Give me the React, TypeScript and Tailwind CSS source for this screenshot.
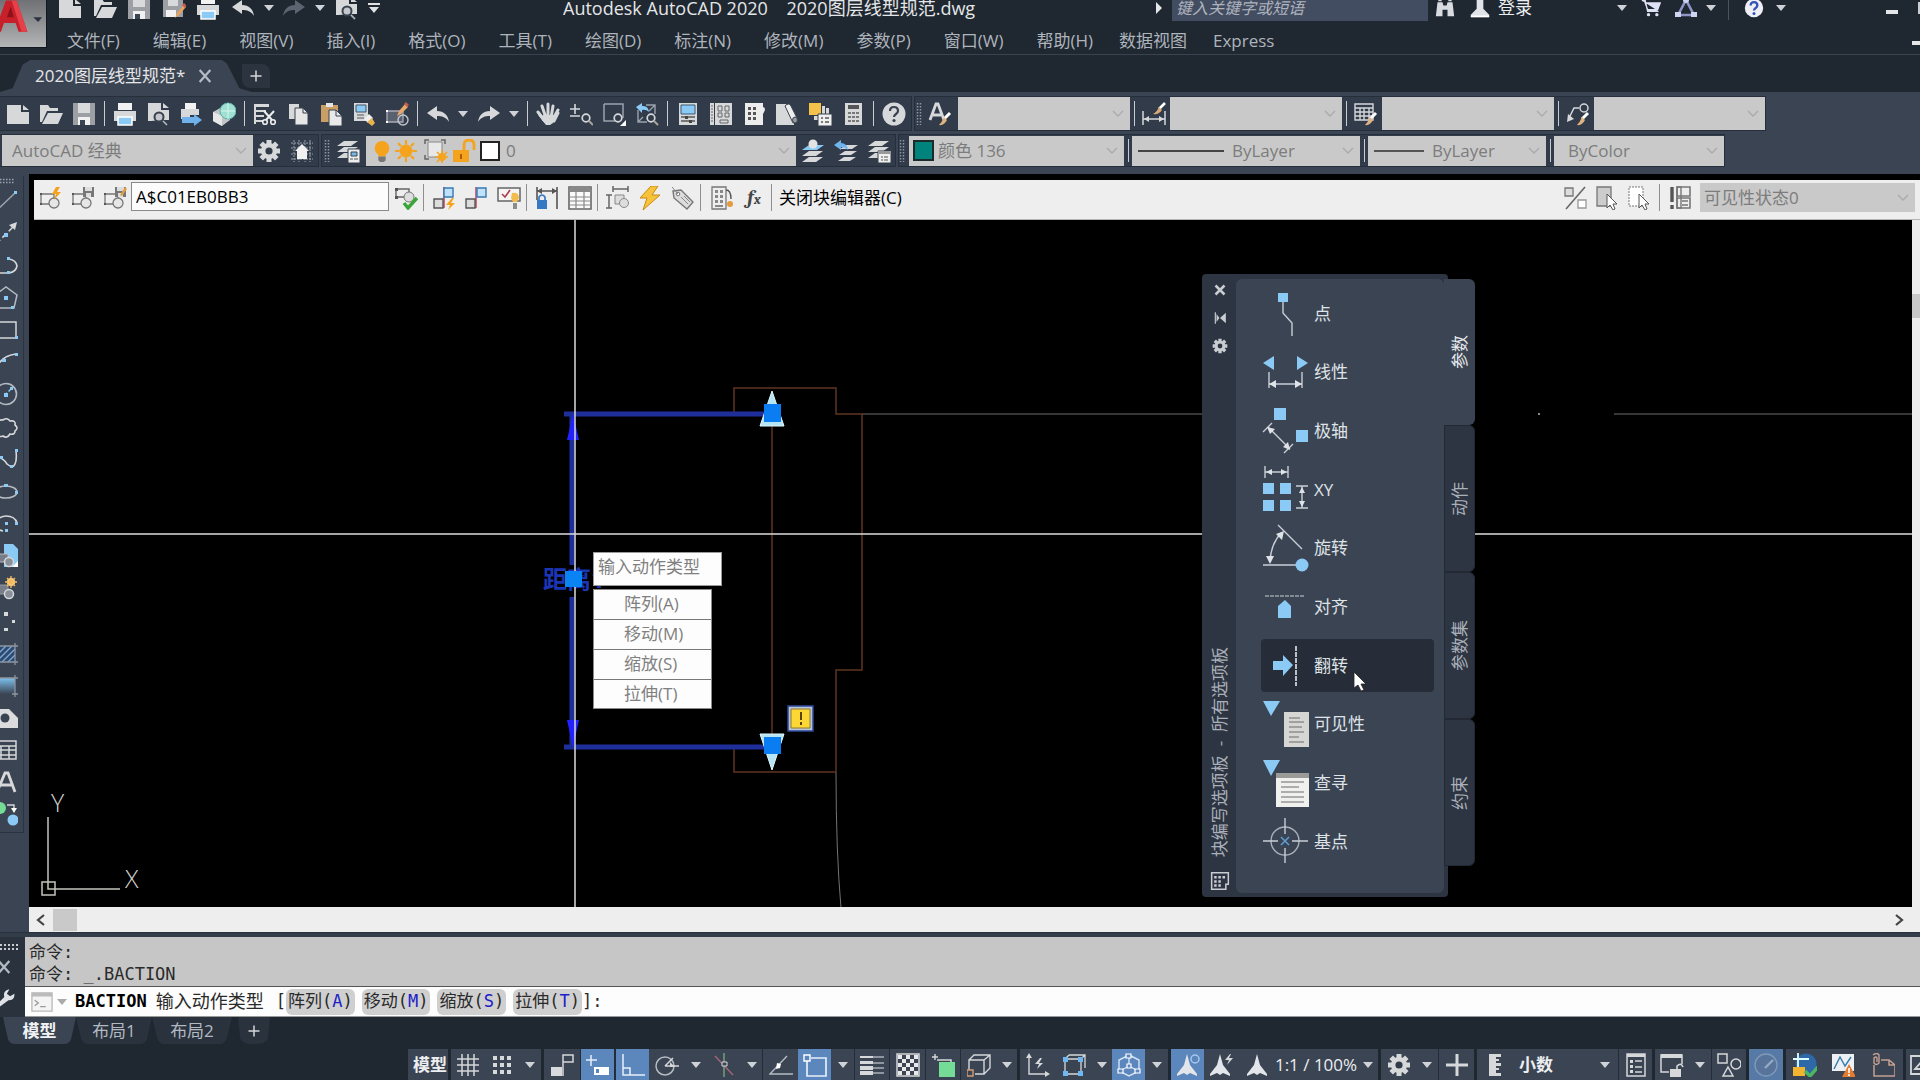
import type { ReactNode } from "react";

const L = "#d6d8da";
const B = "#8ccaf6";
const O = "#f5a31c";

const sheet = "M1 3h14v7h8v12H1z M17 3l6 5h-6z";
const gearTeeth = (c: string, hole: string) => (
  <>
    <g stroke={c} strokeWidth="5">
      <path d="M12 1v22M1 12h22M4.2 4.2l15.6 15.6M19.8 4.2L4.2 19.8" />
    </g>
    <circle cx="12" cy="12" r="8" fill={c} />
    <circle cx="12" cy="12" r="3.6" fill={hole} />
  </>
);
const brush = (
  <>
    <path d="M22 11l-6 6" stroke="#fff" strokeWidth="3" />
    <path d="M16 15l3 3q-3 6-8 5 3-3 5-8z" fill="#e0b283" />
  </>
);
const blockShape = (
  <>
    <path d="M2 8h13v10H2z" fill="none" stroke="#777" strokeWidth="1.3" />
    <circle cx="15" cy="17" r="5" fill="#e6e6e6" stroke="#777" strokeWidth="1.3" />
    <path d="M1 7h2v2H1zM1 17h2v2H1z" fill="#555" />
  </>
);
const layers = (
  <path d="M8 2h14l-7 5H1zM8 8h14l-7 5H1zM8 14h14l-7 5H1z" fill={L} />
);
const annoA = (x: number) => (
  <path d={`M${x} 1l3 11 7 9v2l-7-3-3 2-3-2-7 3v-2l7-9z`} fill="#e2e5e9" />
);

const icons: Record<string, ReactNode> = {
  new: <path d={sheet} fill={L} />,
  open: (
    <>
      <path d="M1 3h8l2 3h8v3H8L3 20H1z" fill={L} />
      <path d="M9 11h15l-5 11H3z" fill={L} />
    </>
  ),
  save: (
    <>
      <path d="M1 1h22v22H1z" fill="#9c9fa3" />
      <path d="M6 1h12v10H6z" fill="#d9dadc" />
      <path d="M6 15h12v8H6z" fill="#f1f1f1" />
      <path d="M8 18h5v5H8z" fill="#3b4453" />
    </>
  ),
  saveas: (
    <>
      <path d="M1 1h20v20H1z" fill="#9c9fa3" />
      <path d="M6 1h10v9H6z" fill="#d9dadc" />
      <path d="M4 14h10v7H4z" fill="#f1f1f1" />
      <path d="M13 22l2-5 7-8 2 2-7 8z" fill="#e8a35b" />
      <path d="M20 9l2-2 3 3-2 2z" fill="#c45b4e" />
    </>
  ),
  print: (
    <>
      <path d="M5 1h14v7H5z" fill="#f2f2f2" />
      <path d="M1 9h22v10H1z" fill={L} />
      <path d="M5 15h14v8H5z" fill={B} stroke="#fff" strokeWidth="1.5" />
    </>
  ),
  preview: (
    <>
      <path d="M2 1h13v7h8v10h-6l-12 1H2z M17 1l6 5h-6z" fill={L} />
      <circle cx="13" cy="15" r="4.5" fill="#c4c7cc" stroke="#39424f" strokeWidth="2" />
      <path d="M16 18l5 5" stroke="#39424f" strokeWidth="3" />
      <path d="M17 19l4 4" stroke="#b9bcc0" strokeWidth="1.4" />
    </>
  ),
  publish: (
    <>
      <path d="M6 1h11v6H6z" fill="#f2f2f2" />
      <path d="M2 7h18v6H2zM2 12h9v5H2z" fill={L} />
      <path d="M3 15h12v-3l8 6-8 6v-3H3z" fill="#6fb1ea" />
    </>
  ),
  sphere: (
    <>
      <path d="M1 10l9-5 8 4v9l-8 6-9-5z" fill="#c2c5c7" />
      <path d="M1 10l9 4v10l-9-5z" fill="#e6e8e8" />
      <circle cx="16" cy="9" r="8" fill="#9fe0d2" stroke="#5db2a4" strokeWidth="1" />
      <path d="M9 9h14M16 1v16" stroke="#d6f5ee" />
    </>
  ),
  cut: (
    <>
      <path d="M1 2h15v3H1zM1 8h12v2H1zM1 13h10v2H1zM1 18h9v2H1zM1 2h2v20H1z" fill={L} />
      <path d="M11 9l8 9M21 9l-8 9" stroke="#eee" strokeWidth="2" />
      <circle cx="12" cy="20" r="2.3" fill="none" stroke="#eee" strokeWidth="1.6" />
      <circle cx="20" cy="20" r="2.3" fill="none" stroke="#eee" strokeWidth="1.6" />
    </>
  ),
  copy: (
    <>
      <path d="M3 2h10v15H3z" fill={L} />
      <path d="M9 6h8l5 5v12H9z" fill="#e6e6e6" stroke="#39424f" strokeWidth="1" />
      <path d="M17 6v5h5" fill="none" stroke="#39424f" />
    </>
  ),
  paste: (
    <>
      <path d="M2 3h17v17H2z" fill="#c99f66" />
      <path d="M7 1h7v4H7z" fill="#e4e4e4" />
      <path d="M10 8h7l6 6v10H10z" fill="#e9e9e9" stroke="#39424f" strokeWidth="1" />
      <path d="M17 8v6h6" fill="none" stroke="#39424f" />
    </>
  ),
  match: (
    <>
      <path d="M2 1h14v18H2z" fill={L} />
      <path d="M4 3h10v7H4z" fill={B} stroke="#456" />
      <path d="M5 13h7M5 16h7" stroke="#555" />
      <path d="M12 17l5-5 4 4-5 5z" fill="#efefef" />
      <path d="M15 20l5-4 3 5-3 3z" fill="#e5b350" />
    </>
  ),
  blockedit: (
    <>
      <path d="M2 9h16v11H2z" fill="#59616e" stroke="#aab" strokeWidth="1.3" />
      <path d="M1 8h2v2H1zM1 19h2v2H1z" fill="#fff" />
      <circle cx="18" cy="18" r="5" fill="none" stroke="#c3c7cc" strokeWidth="1.4" />
      <path d="M12 14l2-5 6-7 3 3-7 7z" fill="#e6a86b" />
      <path d="M19 2l2-2 3 3-2 2z" fill="#c45b4e" />
    </>
  ),
  undo: <path d="M1 11l10-7v5c7 0 11 4 12 11-3-5-7-6-12-6v4z" fill={L} />,
  redo: <path d="M23 11l-10-7v5C6 9 2 13 1 20c3-5 7-6 12-6v4z" fill={L} />,
  redoOff: <path d="M23 11l-10-7v5C6 9 2 13 1 20c3-5 7-6 12-6v4z" fill="#5b6470" />,
  pan: (
    <>
      <path d="M4 13l5 6h9l4-8" stroke={L} strokeWidth="3" fill="none" strokeLinecap="round" />
      <path
        d="M2 10l6 8M6 4l4 12M12 2v13M17 4l-2 12M22 8l-5 9"
        stroke={L}
        strokeWidth="3"
        strokeLinecap="round"
      />
      <path d="M7 13h11l-1 8-3 2h-4l-4-5z" fill={L} />
    </>
  ),
  zoomrt: (
    <>
      <path d="M6 2v10M1 7h10M1 14h10" stroke={L} strokeWidth="1.6" />
      <circle cx="17" cy="16" r="3.8" fill="none" stroke={L} strokeWidth="1.7" />
      <path d="M20 19l4 4" stroke="#a9a29a" strokeWidth="2.2" />
    </>
  ),
  zoomwin: (
    <>
      <path d="M2 2h19v14M13 19H2V2" fill="none" stroke="#9aa2ad" strokeWidth="1.5" />
      <circle cx="16" cy="16" r="3.8" fill="none" stroke={L} strokeWidth="1.7" />
      <path d="M24 18v6h-6z" fill="#fff" />
    </>
  ),
  zoomprev: (
    <>
      <path d="M3 8v12h9M11 3h9v9M3 20l5-5M20 3l-6 6" fill="none" stroke="#9aa2ad" strokeWidth="1.4" />
      <path d="M1 5l6-4v3q6-1 7 6-3-3-7-2v3z" fill={B} />
      <circle cx="16" cy="16" r="3.8" fill="none" stroke={L} strokeWidth="1.7" />
      <path d="M19 19l4 4" stroke="#a9a29a" strokeWidth="2.2" />
    </>
  ),
  props: (
    <>
      <path d="M3 1h18v22H3z" fill={L} />
      <path d="M5 3h14v9H5z" fill={B} stroke="#3b5872" />
      <path d="M5 15h14M5 19h14" stroke="#555" strokeWidth="1.3" />
      <path d="M9 14h3v3H9zM13 18h3v3h-3z" fill="#444" />
    </>
  ),
  dcenter: (
    <>
      <path d="M1 1h4v22H1zM6 1h17v22H6z" fill={L} />
      <path d="M9 4h4v5H9zM16 4h4v5h-4zM9 11h4v4H9zM16 11h4v4h-4zM11 18h8v3h-8z" fill="none" stroke="#666" />
      <path d="M2 4h2M2 7h2M2 10h2M2 13h2M2 16h2M2 19h2" stroke="#666" />
    </>
  ),
  toolpal: (
    <>
      <path d="M3 1h18v4q4 1 0 7v11H3z" fill="#ececec" />
      <path
        d="M6 5h3v3H6zM11 5h3v3h-3zM6 10h3v3H6zM11 10h3v3h-3zM6 15h3v3H6zM11 15h3v3h-3z"
        fill="#555"
      />
    </>
  ),
  sheetset: (
    <>
      <path d="M1 2h10l8 13v8H1z" fill={L} />
      <path d="M10 4q4-4 6 0l6 12q1 5-4 5z" fill="#ededed" stroke="#39424f" />
      <ellipse cx="20" cy="18" rx="2.4" ry="3" fill="#9a9da1" stroke="#39424f" />
    </>
  ),
  markup: (
    <>
      <path d="M1 1h12v12H1z" fill="#f5c24c" />
      <path d="M14 4h3v8h-3zM18 6h3v6h-3zM6 14h6v4H6z" fill={L} />
      <path d="M10 12h14v12H10z" fill="#f0f0f0" stroke="#39424f" />
      <path d="M13 16h2M17 16h4M13 20h2M17 20h4" stroke="#555" strokeWidth="1.4" />
    </>
  ),
  calc: (
    <>
      <path d="M4 1h17v22H4z" fill={L} />
      <path d="M7 3h11v4H7z" fill="#555" />
      <path
        d="M7 10h3v2H7zM11 10h3v2h-3zM15 10h3v2h-3zM7 14h3v2H7zM11 14h3v2h-3zM15 14h3v2h-3zM7 18h3v2H7zM11 18h3v2h-3zM15 18h3v2h-3z"
        fill="#777"
      />
    </>
  ),
  help: (
    <>
      <circle cx="12" cy="12" r="11.5" fill={L} />
      <path d="M8 9q0-4 4-4t4 4c0 3-4 3-4 6" fill="none" stroke="#39424f" strokeWidth="2.2" />
      <circle cx="12" cy="18.5" r="1.6" fill="#39424f" />
    </>
  ),
  helpBlue: (
    <>
      <circle cx="12" cy="12" r="11" fill="#eef0f5" />
      <path d="M8 9q0-4 4-4t4 4c0 3-4 3-4 6" fill="none" stroke="#3253b8" strokeWidth="2.8" />
      <circle cx="12" cy="18.5" r="1.8" fill="#3253b8" />
    </>
  ),
  textstyle: (
    <>
      <path d="M2 18L8 2h2l6 16M5 13h8" fill="none" stroke={L} strokeWidth="2.8" />
      {brush}
    </>
  ),
  dimstyle: (
    <>
      <path d="M1 9v14M23 9v14M1 17h22" fill="none" stroke={L} strokeWidth="1.5" />
      <path d="M2 17l5-3v6zM22 17l-5-3v6z" fill={L} />
      <path d="M23 1l-6 6" stroke="#fff" strokeWidth="2.6" />
      <path d="M17 5l3 3q-3 5-9 4 4-2 6-7z" fill="#d9a877" />
    </>
  ),
  tablestyle: (
    <>
      <path d="M1 2h18v16H1zM1 6h18M1 10h18M1 14h18M6 6v12M10 6v12M15 6v12" fill="none" stroke={L} strokeWidth="1.4" />
      {brush}
    </>
  ),
  leaderstyle: (
    <>
      <path d="M3 16L8 6h5" fill="none" stroke={L} strokeWidth="1.5" />
      <circle cx="18" cy="6" r="4" fill="none" stroke={L} strokeWidth="1.5" />
      <path d="M1 20l1-8 6 5z" fill={L} />
      {brush}
    </>
  ),
  gear: gearTeeth(L, "#323b49"),
  gridhouse: (
    <>
      <path d="M4 1v22M9 1v22M15 1v22M20 1v22M1 4h22M1 9h22M1 15h22M1 20h22" stroke="#9aa1ab" strokeDasharray="2 1" />
      <path d="M12 5l7 7h-2v8H7v-8H5z" fill="#f1f1f1" />
    </>
  ),
  layerprops: (
    <>
      {layers}
      <path d="M12 10h12v14H12z" fill="#eee" stroke="#39424f" />
      <path d="M15 13h6v4h-6z" fill="#7db7e2" stroke="#345" />
      <path d="M14 20h3M18 20h4" stroke="#555" />
    </>
  ),
  layercurrent: (
    <>
      <path d="M8 12h14l-7 5H1zM8 18h14l-7 5H1z" fill={L} />
      <path d="M8 6h15l-7 5H1z" fill={B} />
      <circle cx="12" cy="5" r="4.5" fill="#e3e3e3" />
    </>
  ),
  layerprev: (
    <>
      <path d="M12 6h12l-6 4H6zM11 12h12l-6 4H5zM10 18h12l-6 4H4z" fill={L} />
      <path d="M0 6l7-5v3q6 0 7 7-3-3-7-3v3z" fill="#6fb4ec" />
    </>
  ),
  layerstate: (
    <>
      {layers}
      <path d="M11 12h13v12H11z" fill="#f0f0f0" stroke="#39424f" />
      <path d="M11 12h13v3H11z" fill="#999" />
      <path d="M14 18h2M17 18h4M14 21h2M17 21h4" stroke="#555" />
    </>
  ),
  bulb: (
    <>
      <circle cx="12" cy="9" r="8" fill={O} />
      <path d="M8 15h8v3H8z" fill={O} />
      <path d="M8 18h8v4l-2 2h-4l-2-2z" fill="#777" />
    </>
  ),
  sun: (
    <>
      <circle cx="12" cy="12" r="7" fill={O} />
      <path
        d="M12 1v3M12 20v3M1 12h3M20 12h3M4 4l2 2M18 18l2 2M20 4l-2 2M4 20l2-2"
        stroke={O}
        strokeWidth="2.4"
        strokeLinecap="round"
      />
    </>
  ),
  vpfreeze: (
    <>
      <path d="M4 3h14v15H4z" fill="#e8e8e8" stroke="#888" />
      <path d="M1 5V1h4M17 1h4v4M1 16v4h4" fill="none" stroke="#666" strokeWidth="1.5" />
      <circle cx="18" cy="18" r="4" fill={O} />
      <path d="M18 11v3M18 22v2M11 18h3M22 18h2M13 13l2 2M23 13l-2 2M13 23l2-2" stroke={O} strokeWidth="1.6" />
    </>
  ),
  unlock: (
    <>
      <path d="M1 11h16v12H1z" fill={O} />
      <path d="M12 11V6q0-5 5-5t5 5v5" fill="none" stroke={O} strokeWidth="2.8" />
      <path d="M9 15v5" stroke="#a65e00" strokeWidth="2" />
    </>
  ),
  bedit: (
    <>
      {blockShape}
      <path d="M17 1l-4 7h4l-2 6 7-8h-4l3-5z" fill={O} />
    </>
  ),
  bsave: (
    <>
      {blockShape}
      <path d="M12 1h11v10H12z" fill="#777" />
      <path d="M14 1h7v4h-7zM15 7h5v4h-5z" fill="#ddd" />
    </>
  ),
  bsaveas: (
    <>
      {blockShape}
      <path d="M12 1h11v10H12z" fill="#777" />
      <path d="M14 1h7v4h-7zM15 7h5v4h-5z" fill="#ddd" />
      <path d="M17 9l5-8 2 2-5 7z" fill="#e0a045" />
    </>
  ),
  btest: (
    <>
      <path d="M2 3h13v8H2z" fill="none" stroke="#666" strokeWidth="1.4" />
      <path d="M1 2h3v3H1zM1 10h3v3H1z" fill="#555" />
      <circle cx="15" cy="11" r="5" fill="#ddd" stroke="#777" />
      <path d="M10 17l4 5 9-10" fill="none" stroke="#3aa53a" strokeWidth="3.4" />
    </>
  ),
  autocon: (
    <>
      <path d="M12 1v21" stroke="#c4405c" strokeWidth="1.5" />
      <path d="M12 2h9v9h-9z" fill="#bfe2fa" stroke="#3779b0" strokeWidth="1.4" />
      <path d="M2 13h9v9H2z" fill="#ddd" stroke="#555" strokeWidth="1.4" />
      <path d="M20 12l-6 7h4l-2 5 7-7h-4l3-5z" fill={O} />
    </>
  ),
  geocon: (
    <>
      <path d="M12 1v21" stroke="#c4405c" strokeWidth="1.5" />
      <path d="M13 2h9v9h-9z" fill="#bfe2fa" stroke="#3779b0" strokeWidth="1.4" />
      <path d="M2 13h9v9H2z" fill="#ddd" stroke="#555" strokeWidth="1.4" />
    </>
  ),
  constatus: (
    <>
      <path d="M1 2h22v13H1z" fill="#f5f5f5" stroke="#666" strokeWidth="1.5" />
      <path d="M5 8l3 3 5-7" fill="none" stroke="#b03c50" strokeWidth="1.6" />
      <path d="M15 7q7-1 7 5l-2 4h-4l-2-4z" fill="#f2bd4e" />
      <path d="M16 17h4v6h-4z" fill="#8c8c8c" />
    </>
  ),
  dimlock: (
    <>
      <path d="M2 1v13M22 1v22M2 5h20" fill="none" stroke="#555" strokeWidth="1.6" />
      <path d="M2 5l5-3v6zM22 5l-5-3v6z" fill="#555" />
      <path d="M2 14h10v9H2z" fill="#3579c4" />
      <path d="M4 14v-3q3-4 6 0v3" fill="none" stroke="#3579c4" strokeWidth="1.7" />
    </>
  ),
  btable: (
    <>
      <path d="M1 1h22v22H1z" fill="#fafafa" stroke="#666" strokeWidth="1.6" />
      <path d="M1 2h22v4H1z" fill="#888" />
      <path d="M1 11h22M1 15h22M1 19h22M8 6v17M16 6v17" stroke="#888" strokeWidth="1.2" />
    </>
  ),
  bparam: (
    <>
      <path d="M7 3h15M7 0v6M22 0v6M3 9v13M0 9h6M0 22h6" fill="none" stroke="#666" strokeWidth="1.5" />
      <path d="M9 9h9v9H9z" fill="#ddd" stroke="#888" />
      <circle cx="18" cy="17" r="4.5" fill="#ddd" stroke="#888" />
    </>
  ),
  bolt: <path d="M13 0L2 12h7L5 24l17-15h-8l6-9z" fill="#f7c33b" stroke="#c98a12" strokeWidth="1" />,
  tag: (
    <>
      <path d="M2 5l8-1 12 12-6 7L3 12z" fill="#ddd" stroke="#777" strokeWidth="1.4" />
      <circle cx="7" cy="8" r="1.8" fill="#fff" stroke="#777" />
      <path d="M10 11l7 7M13 10l6 6M1 1l6 7" stroke="#888" />
    </>
  ),
  bpalette: (
    <>
      <path d="M3 1h14v22H3z" fill="#eee" stroke="#777" strokeWidth="1.3" />
      <path d="M6 4h3v3H6zM11 4h3v3h-3zM6 9h3v3H6zM11 9h3v3h-3zM6 14h3v3H6zM11 14h3v3h-3zM6 19h8v2H6z" fill="#888" />
      <path d="M17 4q5 0 5 9" fill="none" stroke="#555" strokeWidth="1.4" />
      <circle cx="21" cy="18" r="3" fill="#e59a3d" />
    </>
  ),
  vismode: (
    <>
      <path d="M2 2h8v8H2z" fill="#ddd" stroke="#777" strokeWidth="1.3" />
      <path d="M15 14h8v8h-8z" fill="#fff" stroke="#999" strokeWidth="1.3" />
      <path d="M22 1L3 23" stroke="#666" strokeWidth="1.6" />
    </>
  ),
  makevis: (
    <>
      <path d="M2 1h14v19H2z" fill="#ccc" stroke="#777" strokeWidth="1.3" />
      <path d="M12 8v14l3-3 3 5 2-1-2-5h4z" fill="#fff" stroke="#555" />
    </>
  ),
  makeinvis: (
    <>
      <path d="M2 1h14v19H2z" fill="#fff" stroke="#777" strokeDasharray="2 1" />
      <path d="M12 8v14l3-3 3 5 2-1-2-5h4z" fill="#fff" stroke="#555" />
    </>
  ),
  visstates: (
    <>
      <path d="M4 1v15M4 19v4" stroke="#555" strokeWidth="3.4" />
      <path d="M9 1h13v9H9zM9 12h13v10H9z" fill="none" stroke="#777" strokeWidth="1.6" />
      <path d="M9 1h4v21H9zM14 15h6M14 19h6" stroke="#777" strokeWidth="1.4" />
    </>
  ),
  binoculars: (
    <path d="M3 5h6l1 4h4l1-4h6l2 17h-8v-8h-6v8H1zM4 1h4v3H4zM16 1h4v3h-4z" fill="#d8dbe0" />
  ),
  user: (
    <>
      <path d="M8 1h8v12l7 7v3H1v-3l7-7z" fill="#e0e3e8" />
      <path d="M1 21h22v2H1z" fill="#fff" />
    </>
  ),
  cart: (
    <>
      <path d="M1 3h4l3 13h13M5 6h18l-3 8H8z" fill="#dfe2f5" stroke="#dfe2f5" strokeWidth="1.6" />
      <circle cx="9" cy="20" r="2" fill="#dfe2f5" />
      <circle cx="19" cy="20" r="2" fill="#dfe2f5" />
    </>
  ),
  autodesk: (
    <>
      <path d="M12 4L4 19h16z" fill="none" stroke="#8d96c4" strokeWidth="2.6" strokeLinejoin="round" />
      <circle cx="12" cy="4" r="3" fill="#cfd5f0" />
      <path d="M1 16h6v5H1zM17 16h6v5h-6z" fill="#cfd5f0" />
    </>
  ),
  line: (
    <>
      <path d="M0 23L21 3" stroke="#9aa3ae" strokeWidth="1.5" />
      <path d="M20 1h3v3h-3z" fill={B} />
    </>
  ),
  xline: (
    <>
      <path d="M2 22L20 4" stroke={L} strokeWidth="1.5" strokeDasharray="6 3" />
      <path d="M23 0l-2 8-6-5z" fill={L} />
      <path d="M10 11h4v4h-4z" fill={B} />
    </>
  ),
  pline: (
    <>
      <path d="M0 19h15q7-1 8-7-1-6-8-7" fill="none" stroke={L} strokeWidth="1.6" />
      <path d="M13 3h3v3h-3zM13 17h3v3h-3z" fill={B} />
    </>
  ),
  polygon: (
    <>
      <path d="M1 9l11-8 11 8-3 13H4z" fill="none" stroke="#b4bac2" strokeWidth="1.5" />
      <path d="M10 10h4v4h-4zM17 20h3v3h-3z" fill={B} />
    </>
  ),
  rect: (
    <>
      <path d="M0 4h22v16H0" fill="none" stroke={L} strokeWidth="1.5" />
      <path d="M21 18h3v3h-3z" fill={B} />
    </>
  ),
  arc: (
    <>
      <path d="M2 20Q6 6 22 4" fill="none" stroke={L} strokeWidth="1.6" />
      <path d="M21 3h3v3h-3zM8 9h4v3H8z" fill={B} />
    </>
  ),
  circle: (
    <>
      <circle cx="12" cy="12" r="10.5" fill="none" stroke="#b4bac2" strokeWidth="1.6" />
      <path d="M11 13l6-6" stroke={B} strokeWidth="1.5" strokeDasharray="3 2" />
      <path d="M10 11h4v4h-4zM16 5h3v3h-3z" fill={B} />
    </>
  ),
  cloud: (
    <path
      d="M4 8q0-5 5-4 4-3 7 1 6-1 5 4 4 3 0 6 0 4-5 3-3 5-7 2-5 2-5-3-5-2-2-5-2-3 2-4z"
      fill="none"
      stroke={L}
      strokeWidth="1.6"
    />
  ),
  spline: (
    <>
      <path d="M6 10q4 1 7 6 6 5 8 0 2-4 1-13" fill="none" stroke={L} strokeWidth="1.6" />
      <path d="M21 1h3v3h-3zM6 8h3v3H6zM16 17h3v3h-3z" fill={B} />
    </>
  ),
  ellipse: (
    <>
      <ellipse cx="12" cy="12" rx="11" ry="6" fill="none" stroke="#b4bac2" strokeWidth="1.6" />
      <path d="M10 4h4v3h-4zM21 11h3v3h-3z" fill={B} />
    </>
  ),
  earc: (
    <>
      <path d="M1 10q5-6 11-6 9 0 11 7M1 15q3 3 8 4" fill="none" stroke={L} strokeWidth="1.6" />
      <path d="M11 10h3v3h-3zM21 10h3v3h-3zM11 17h3v3h-3z" fill={B} />
    </>
  ),
  insert: (
    <>
      <path d="M10 0h9l5 5v18H10z" fill={B} />
      <path d="M0 10h14v8H0z" fill="#777e89" stroke="#bbb" />
      <circle cx="15" cy="18" r="4.5" fill="#8a909a" stroke={L} strokeWidth="1.5" />
      <path d="M24 17v6h-6z" fill="#fff" />
    </>
  ),
  makeblock: (
    <>
      <path d="M0 9h14v9H0z" fill="#777e89" stroke="#999" />
      <circle cx="15" cy="18" r="4.5" fill="#8a909a" stroke={L} strokeWidth="1.5" />
      <circle cx="17" cy="6" r="4" fill="#ffdf9a" />
      <path d="M17 0v12M11 6h12M13 2l8 8M21 2l-8 8" stroke="#f5b95c" strokeWidth="1.4" />
    </>
  ),
  point: <path d="M10 2h4v4h-4zM18 10h3v3h-3zM10 18h4v3h-4z" fill={L} />,
  hatch: (
    <>
      <path d="M0 4h21v16H0z" fill="#2d4a70" />
      <path d="M0 10l6-6M0 16L12 4M2 20L18 4M8 20L21 7M14 20l7-7" stroke="#7fa7d1" strokeWidth="1.3" />
      <path d="M0 4h24M0 20h24M21 1v22" stroke="#8d95a0" strokeWidth="1.3" />
    </>
  ),
  gradient: (
    <>
      <defs>
        <linearGradient id="grd" x1="0" y1="0" x2="0" y2="1">
          <stop offset="0" stopColor="#7cc2ef" />
          <stop offset="1" stopColor="#3b4453" />
        </linearGradient>
      </defs>
      <path d="M0 4h21v16H0z" fill="url(#grd)" />
      <path d="M0 4h24M21 1v22M18 20h6" stroke="#8d95a0" strokeWidth="1.3" />
    </>
  ),
  region: (
    <>
      <path d="M0 3h15l9 9v10H0z" fill="#dcdcde" />
      <circle cx="11" cy="12" r="4.5" fill="#3b4453" />
    </>
  ),
  table: (
    <path d="M0 3h22v18H0M0 8h22M0 12h22M0 17h22M7 8v13M15 8v13" fill="none" stroke={L} strokeWidth="1.5" />
  ),
  mtext: <path d="M3 22L11 3h3l7 19M6 15h12" fill="none" stroke={L} strokeWidth="2.8" />,
  addsel: (
    <>
      <circle cx="6" cy="6" r="6" fill="#74dc95" />
      <path d="M13 3h7v4" fill="none" stroke={L} strokeWidth="1.4" />
      <path d="M17 6h6l-3 5z" fill="#fff" />
      <circle cx="19" cy="18" r="5.5" fill={B} />
    </>
  ),
  close: <path d="M3 3l18 18M21 3L3 21" stroke="#c9cdd2" strokeWidth="5" />,
  closeThin: <path d="M4 3l16 18M20 3L4 21" stroke="#b4bac2" strokeWidth="3.4" />,
  autohide: (
    <>
      <path d="M4 2v20" stroke="#c9cdd2" strokeWidth="2" />
      <path d="M6 5l5 7-5 7zM22 3v18l-10-9z" fill="#c9cdd2" />
    </>
  ),
  wrench: (
    <path
      d="M0 22l10-10q-2-7 5-9l1 0-3 5 4 3 5-3q1 8-7 8L4 24z"
      fill="#dfe2e6"
    />
  ),
  palettebox: (
    <>
      <path d="M2 2h20v14h-3v6H2z" fill="none" stroke="#c9cdd2" strokeWidth="1.8" />
      <path d="M5 6h3v3H5zM10 6h3v3h-3zM15 6h3v3h-3zM5 11h3v3H5zM10 11h3v3h-3zM5 16h3v3H5zM10 16h3v3h-3z" fill="#c9cdd2" />
    </>
  ),
  prompt: (
    <>
      <path d="M1 2h22v20H1z" fill="#f4f4f4" stroke="#bbb" strokeWidth="1.5" />
      <path d="M1 2h22v4H1z" fill="#bbb" />
      <path d="M4 10l4 3-4 3M10 17h6" fill="none" stroke="#999" strokeWidth="1.4" />
    </>
  ),
  grid: <path d="M6 1v22M12 1v22M18 1v22M1 6h22M1 12h22M1 18h22" stroke={L} strokeWidth="1.5" />,
  snapdots: (
    <path
      d="M3 3h4v4H3zM10 3h4v4h-4zM17 3h4v4h-4zM3 10h4v4H3zM10 10h4v4h-4zM17 10h4v4h-4zM3 17h4v4H3zM10 17h4v4h-4zM17 17h4v4h-4z"
      fill={L}
    />
  ),
  infer: (
    <>
      <path d="M1 14h11v9H1z" fill="#d9dadd" />
      <path d="M13 23V2h10v7H13" fill="none" stroke={L} strokeWidth="1.5" />
    </>
  ),
  dyn: (
    <>
      <path d="M5 2v11M0 7h11" stroke="#e7eefa" strokeWidth="1.5" />
      <path d="M8 14h15v8H8z" fill="#fff" />
      <path d="M10 16h3v4h-3z" fill="#5b87bd" />
    </>
  ),
  ortho: <path d="M2 1v21h22M2 15h7v7" fill="none" stroke="#e7eefa" strokeWidth="1.5" />,
  polar: (
    <>
      <circle cx="10" cy="13" r="9" fill="none" stroke="#b4bac2" strokeWidth="1.5" />
      <path d="M10 13h14M10 13l8-8" stroke={L} strokeWidth="1.5" />
      <path d="M15 9l5 5-5 0z" fill={L} />
    </>
  ),
  iso: (
    <>
      <path d="M3 3l18 19" stroke="#a3667c" strokeWidth="1.4" />
      <path d="M12 0v24" stroke="#78a67c" strokeWidth="1.4" />
      <path d="M10 9h5v4h-5z" fill="#3b4453" stroke={L} />
    </>
  ),
  angle: (
    <>
      <path d="M18 3L1 21h23" fill="none" stroke="#b4bac2" strokeWidth="1.4" />
      <path d="M8 10l4 1-1 4-4 1z" fill="#fff" />
    </>
  ),
  osnap: (
    <>
      <path d="M8 5h15v18H4V8" fill="none" stroke="#e7eefa" strokeWidth="1.7" />
      <path d="M1 2h6v6H1z" fill="#5b87bd" stroke="#fff" strokeWidth="1.4" />
    </>
  ),
  lweight: (
    <>
      <path d="M0 4h24M0 10h24M0 15h24M0 20h24" stroke="#aab0b9" strokeWidth="1.5" />
      <path d="M0 3h13v2H0zM0 8h13v3H0zM0 13h13v4H0zM0 18h13v4H0z" fill={L} />
    </>
  ),
  checker: (
    <>
      <path d="M1 1h22v22H1z" fill="none" stroke={L} strokeWidth="1.5" />
      <path
        d="M2 2h4v4H2zM10 2h4v4h-4zM18 2h4v4h-4zM6 6h4v4H6zM14 6h4v4h-4zM2 10h4v4H2zM10 10h4v4h-4zM18 10h4v4h-4zM6 14h4v4H6zM14 14h4v4h-4zM2 18h4v4H2zM10 18h4v4h-4zM18 18h4v4h-4z"
        fill="#e7e9eb"
      />
    </>
  ),
  selcycle: (
    <>
      <path d="M4 1v6M1 4h6" stroke={L} strokeWidth="1.4" />
      <path d="M6 7h14v3" fill="none" stroke={L} strokeWidth="1.5" />
      <path d="M8 9h16v15H8z" fill="#74dc95" />
    </>
  ),
  cube: (
    <>
      <path d="M2 20V7h15v14H8M2 7l5-5h16v13l-6 6M17 7l6-5" fill="none" stroke={L} strokeWidth="1.4" />
      <path d="M0 17h6v6H0z" fill="#3b4453" stroke="#d49d75" strokeWidth="1.4" />
    </>
  ),
  ducs: (
    <>
      <path d="M3 3v18h18" fill="none" stroke={L} strokeWidth="1.4" />
      <path d="M3 0l3 5H0zM24 21l-5-3v6zM14 5l-5 6h4l-2 5 6-6h-4l3-5z" fill={L} />
    </>
  ),
  cubesel: (
    <>
      <path d="M3 6h16v15H3zM7 2h16v13M19 6l4-4M3 6l4-4" fill="none" stroke={L} strokeWidth="1.3" />
      <path d="M1 4h5v5H1zM16 4h5v5h-5zM1 18h5v5H1zM16 18h5v5h-5z" fill="#6db7f2" />
    </>
  ),
  gizmo: (
    <>
      <path d="M12 2l10 5v11l-10 5-10-5V7zM12 4v9M12 13l-9 5M12 13l9 5" fill="none" stroke="#d4e3f5" strokeWidth="1.4" />
      <path d="M9 1h5v4H9zM1 16h5v4H1zM18 16h5v4h-5zM10 11h4v4h-4z" fill="#5b87bd" stroke="#fff" strokeWidth="1.2" />
    </>
  ),
  anno1: (
    <>
      {annoA(11)}
      <circle cx="19" cy="6" r="4" fill="none" stroke="#a8c8ee" strokeWidth="1.5" />
    </>
  ),
  anno2: (
    <>
      {annoA(10)}
      <path d="M20 1l-5 6h4l-2 5 6-7h-4l2-4z" fill={L} />
    </>
  ),
  anno3: annoA(12),
  plus: <path d="M12 1v22M1 12h22" stroke={L} strokeWidth="3" />,
  ruler: (
    <>
      <path d="M6 1h7v22H6z" fill={L} />
      <path d="M13 1h5v3h-5zM13 6h3v2h-3zM13 10h5v3h-5zM13 15h3v2h-3zM13 20h5v3h-5z" fill={L} />
    </>
  ),
  qprops: (
    <>
      <path d="M3 1h18v22H3z" fill="none" stroke={L} strokeWidth="1.5" />
      <path d="M3 1h18v3H3zM6 7h3v3H6zM6 12h3v3H6zM6 17h3v3H6z" fill={L} />
      <path d="M11 8h7M11 14h7M11 19h7" stroke={L} strokeWidth="1.5" />
    </>
  ),
  uilock: (
    <>
      <path d="M9 19H1V2h21v9" fill="none" stroke={L} strokeWidth="1.5" />
      <path d="M1 1h21v4H1zM10 16h11v8H10z" fill={L} />
      <path d="M17 16v-3q4-4 6 1" fill="none" stroke={L} strokeWidth="1.6" />
    </>
  ),
  shapes: (
    <>
      <path d="M1 1h9v9H1zM11 14l5 9H6z" fill="none" stroke={L} strokeWidth="1.5" />
      <circle cx="19" cy="11" r="5" fill="none" stroke={L} strokeWidth="1.5" />
    </>
  ),
  perf: (
    <>
      <circle cx="12" cy="12" r="11" fill="#58749a" stroke="#7f99ba" strokeWidth="1.4" />
      <path d="M11 15l8-8" stroke="#94a9c4" strokeWidth="2.4" />
    </>
  ),
  trusted: (
    <>
      <circle cx="13" cy="11" r="10.5" fill="#2e68a8" />
      <path d="M5 0v14M0 6h16" stroke="#dff" strokeWidth="1.8" />
      <path d="M0 14h12v9H0z" fill="#f2b431" />
      <path d="M12 18l5 5 8-9" fill="none" stroke="#4bb564" strokeWidth="3.4" />
    </>
  ),
  monitor: (
    <>
      <path d="M1 1h22v17H1z" fill="#edf1f5" />
      <path d="M3 16l6-12 5 9 6-9" fill="none" stroke="#3b7fae" strokeWidth="1.5" />
      <path d="M18 11l7 13H11z" fill="#e57b2e" />
      <path d="M18 15v5M18 21v2" stroke="#fff" strokeWidth="1.6" />
    </>
  ),
  attach: (
    <>
      <path d="M3 12v11h21V12l-6-5h-8M18 7v5h6" fill="none" stroke="#c4a091" strokeWidth="1.5" />
      <path d="M2 2q4-3 6 0v8q-3 3-5 0V5q2-2 3 0v4" fill="none" stroke="#c4a091" strokeWidth="1.4" />
    </>
  ),
  clean: <path d="M1 3h22v18H1zM5 16l7-8v8z" fill="none" stroke={L} strokeWidth="1.8" />,
};

function Icon({ n, className = "h-6 w-6" }: { n: string; className?: string }) {
  return (
    <svg viewBox="0 0 24 24" className={`${className} shrink-0`} fill="none" aria-hidden="true">
      {icons[n]}
    </svg>
  );
}

function Btn({ n, label, className = "w-[33px]", icon }: { n: string; label: string; className?: string; icon?: string }) {
  return (
    <button type="button" aria-label={label} className={`flex shrink-0 items-center justify-center self-stretch ${className}`}>
      <Icon n={n} className={icon} />
    </button>
  );
}

function Drop({ label, className = "w-[18px]" }: { label: string; className?: string }) {
  return (
    <button type="button" aria-label={label} className={`flex shrink-0 items-center justify-center self-stretch ${className}`}>
      <svg viewBox="0 0 10 6" className="h-1.5 w-2.5" aria-hidden="true">
        <path d="M0 0h10L5 6z" fill="#cfd2d6" />
      </svg>
    </button>
  );
}

const Sep = () => (
  <div className="flex w-2 shrink-0 justify-center self-stretch py-1">
    <div className="w-px bg-[#c9cdd2]" />
  </div>
);

const BarSep = () => <div className="my-1 w-px shrink-0 self-stretch bg-[#8f8f8f]" />;

const Grip = () => (
  <svg viewBox="0 0 6 22" className="h-[22px] w-1.5 shrink-0" aria-hidden="true">
    <path d="M1.5 0v22M4.5 0v22" stroke="#8c95a1" strokeWidth="1.5" strokeDasharray="1.5 1.5" />
  </svg>
);

function Combo({
  label,
  value = "",
  className,
  prefix,
  pad = "pl-0",
}: {
  label: string;
  value?: string;
  className: string;
  prefix?: ReactNode;
  pad?: string;
}) {
  return (
    <div className={`flex shrink-0 items-center bg-[#c9c9c9] pr-1.5 text-[#7c7c7c] ${className}`}>
      {prefix}
      <select aria-label={label} className={`min-w-0 flex-1 appearance-none bg-transparent text-[17px] outline-none ${pad}`}>
        <option>{value}</option>
      </select>
      <svg viewBox="0 0 12 8" className="h-2 w-3 shrink-0" aria-hidden="true">
        <path d="M1 1l5 5 5-5" fill="none" stroke="#ababab" strokeWidth="1.4" />
      </svg>
    </div>
  );
}

const menus = [
  "文件(F)", "编辑(E)", "视图(V)", "插入(I)", "格式(O)", "工具(T)",
  "绘图(D)", "标注(N)", "修改(M)", "参数(P)", "窗口(W)", "帮助(H)",
];

const drawTools: [string, string][][] = [
  [["line", "直线"], ["xline", "构造线"], ["pline", "多段线"], ["polygon", "多边形"], ["rect", "矩形"], ["arc", "圆弧"], ["circle", "圆"]],
  [["cloud", "修订云线"], ["spline", "样条曲线"], ["ellipse", "椭圆"], ["earc", "椭圆弧"], ["insert", "插入块"], ["makeblock", "创建块"]],
  [["point", "点"], ["hatch", "图案填充"], ["gradient", "渐变色"], ["region", "面域"], ["table", "表格"], ["mtext", "多行文字"], ["addsel", "添加选定对象"]],
];

const stroke = { stroke: "#c9ced6", strokeWidth: 1.4, fill: "none" };
const paramItems: { label: string; active?: boolean; art: ReactNode }[] = [
  {
    label: "点",
    art: (
      <>
        <path d="M21 12v11l9 10v13" {...stroke} />
        <path d="M16 3h10v9H16z" fill={B} />
      </>
    ),
  },
  {
    label: "线性",
    art: (
      <>
        <path d="M12 8v14L1 15zM35 8v14l11-7z" fill={B} />
        <path d="M7 24v16M40 24v16M7 36h33" {...stroke} />
        <path d="M7 36l7-4v8zM40 36l-7-4v8z" fill="#dfe3e8" />
      </>
    ),
  },
  {
    label: "极轴",
    art: (
      <>
        <path d="M12 1h12v12H12zM34 23h12v12H34z" fill={B} />
        <path d="M1 25l9-9M22 46l9-9M6 20l22 22" {...stroke} />
        <path d="M5 20l8 2-5 5zM28 43l-2-8-5 5z" fill="#dfe3e8" />
      </>
    ),
  },
  {
    label: "XY",
    art: (
      <>
        <path d="M1 18h11v11H1zM18 18h11v11H18zM1 35h11v11H1zM18 35h11v11H18z" fill={B} />
        <path d="M3 1v12M26 1v12M3 7h23M34 21h12M34 43h12M40 21v22" {...stroke} />
        <path d="M4 7l6-3v6zM25 7l-6-3v6zM40 22l-3 6h6zM40 42l-3-6h6z" fill="#dfe3e8" />
      </>
    ),
  },
  {
    label: "旋转",
    art: (
      <>
        <path d="M16 1l24 24M1 41h34M8 37q1-17 11-28" {...stroke} />
        <path d="M8 40l-4-8h8zM22 7l-2 9-6-6z" fill="#dfe3e8" />
        <circle cx="40" cy="41" r="6.5" fill={B} />
      </>
    ),
  },
  {
    label: "对齐",
    art: (
      <>
        <path d="M3 13h39" stroke="#9aa1ab" strokeWidth="1.4" strokeDasharray="4 1" />
        <path d="M23 17l6 6v12H16V23z" fill={B} />
      </>
    ),
  },
  {
    label: "翻转",
    active: true,
    art: (
      <>
        <path d="M11 20h10v-6l10 10-10 11v-6H11z" fill={B} />
        <path d="M34 5v40" stroke="#fff" strokeWidth="1.4" strokeDasharray="5 1" />
      </>
    ),
  },
  {
    label: "可见性",
    art: (
      <>
        <path d="M1 1h17L9 16z" fill={B} />
        <path d="M22 12h25v35H22z" fill="#d6d6d4" />
        <path d="M27 18h11M27 22h15M27 27h13M27 32h15M27 37h10M27 42h15" stroke="#6b6b6b" strokeWidth="1.2" />
      </>
    ),
  },
  {
    label: "查寻",
    art: (
      <>
        <path d="M1 1h17L9 17z" fill={B} />
        <path d="M14 14h33v34H14z" fill="#f0f0ee" />
        <path d="M14 14h33v5H14z" fill="#9a9a98" />
        <path d="M19 23h23M19 28h18M19 33h23M19 38h23M19 43h23" stroke="#6b6b6b" strokeWidth="1.2" />
      </>
    ),
  },
  {
    label: "基点",
    art: (
      <>
        <circle cx="23" cy="24" r="14" stroke="#aab0ba" strokeWidth="1.4" />
        <path d="M23 1v16M23 31v15M1 24h15M30 24h16" {...stroke} />
        <path d="M19 20l8 8M27 20l-8 8" stroke="#5f9fd4" strokeWidth="1.5" />
      </>
    ),
  },
];

const sideText = "rotate-180 [writing-mode:vertical-rl] [text-orientation:sideways] whitespace-pre";

function Header() {
  return (
    <header className="flex shrink-0 border-b border-[#3a434f] bg-[#1f2730]">
      <button
        type="button"
        aria-label="应用程序菜单"
        className="flex h-12 w-[47px] shrink-0 items-start overflow-hidden border-r border-b border-[#111820] bg-linear-to-b from-[#6f7174] to-[#b4b5b6]"
      >
        <svg viewBox="0 0 47 48" className="h-12 w-[47px]" aria-hidden="true">
          <path d="M-6 32L6 0h11l11 32h-9l-3-9H4l-3 9z" fill="#c8202b" />
          <path d="M7 17h7L11 6z" fill="#8e1018" />
          <path d="M17 0l11 32h-6L12 0z" fill="#e6414a" />
          <path d="M34 17h9l-4 5z" fill="#2b3340" />
        </svg>
      </button>
      <div className="min-w-0 flex-1">
        <div className="-mt-1.5 flex h-[27px] items-center">
          <div className="ml-[6px] flex items-center">
            <Btn n="new" label="新建" className="w-[34px]" />
            <Btn n="open" label="打开" className="w-[35px]" />
            <Btn n="save" label="保存" className="w-[34px]" />
            <Btn n="saveas" label="另存为" className="w-[35px]" />
            <Btn n="print" label="打印" className="w-[34px]" />
            <Btn n="undo" label="放弃" className="w-[35px]" />
            <Drop label="放弃列表" className="w-[17px]" />
            <Btn n="redoOff" label="重做" className="w-[34px]" />
            <Drop label="重做列表" className="w-[17px]" />
            <Btn n="preview" label="打印预览" className="w-[35px]" />
            <button type="button" aria-label="自定义快速访问工具栏" className="flex w-[22px] justify-center">
              <svg viewBox="0 0 12 12" className="h-3 w-3" aria-hidden="true">
                <path d="M0 1h12v2H0zM1 5h10l-5 6z" fill="#dfe1e4" />
              </svg>
            </button>
          </div>
          <h1 className="ml-[178px] w-[589px] shrink-0 whitespace-pre text-lg leading-4 text-[#e4e6e8]">
            {"Autodesk AutoCAD 2020    2020图层线型规范.dwg"}
          </h1>
          <button type="button" aria-label="展开搜索" className="flex w-5 shrink-0">
            <svg viewBox="0 0 6 12" className="ml-1 h-3 w-1.5" aria-hidden="true">
              <path d="M0 0l6 6-6 6z" fill="#e4e6e8" />
            </svg>
          </button>
          <input
            aria-label="搜索"
            placeholder="键入关键字或短语"
            className="h-full w-64 shrink-0 bg-[#434d62] px-1 text-base italic outline-none placeholder:text-[#aeb3bd] placeholder:italic"
          />
          <Btn n="binoculars" label="查找" className="w-[34px]" icon="h-5 w-5" />
          <button type="button" className="flex shrink-0 items-center gap-2 text-[17px] leading-4 text-[#eceef0]">
            <span className="flex w-[28px] justify-end">
              <Icon n="user" className="h-5 w-5" />
            </span>
            登录
          </button>
          <Drop label="帐户" className="ml-auto w-5" />
          <Btn n="cart" label="商店" className="w-[38px]" icon="h-5 w-5" />
          <Btn n="autodesk" label="App Store" className="w-[32px]" />
          <Drop label="App Store 菜单" />
          <div className="ml-2 h-6 w-px bg-[#4a535f]" />
          <Btn n="helpBlue" label="帮助" className="ml-2 w-[34px]" icon="h-5 w-5" />
          <Drop label="帮助菜单" className="w-[19px]" />
          <button type="button" aria-label="最小化" className="ml-[96px] h-full w-3">
            <span className="mt-2 block h-1 w-3 bg-[#e4e6e8]" />
          </button>
          <button type="button" aria-label="最大化" className="ml-5 h-3 w-0.5 bg-[#c9cdd2]" />
        </div>
        <div className="flex h-[33px] items-center pt-1.5">
          <nav className="ml-5 flex gap-[26px] whitespace-nowrap text-[17px] leading-6 text-[#aeb4bc]">
            <div className="flex gap-[33px]">
              {menus.map((m) => (
                <button type="button" key={m}>{m}</button>
              ))}
            </div>
            <button type="button">数据视图</button>
            <button type="button">Express</button>
          </nav>
          <button type="button" aria-label="最小化图形窗口" className="mt-1 ml-auto h-1 w-2 bg-[#e4e6e8]" />
        </div>
      </div>
    </header>
  );
}

function FileTabs() {
  return (
    <div className="flex h-[37px] shrink-0 items-end bg-[#1f2730]">
      <div className="flex h-8 w-[252px] items-center bg-[#3b4453] pl-[35px] text-[17px] text-[#e4e6e8] [clip-path:polygon(0_100%,5%_88%,9%_14%,12%_0,88%_0,90%_10%,95%_88%,100%_100%)]">
        <button type="button">2020图层线型规范*</button>
        <Btn n="closeThin" label="关闭标签" className="ml-1 w-8" icon="h-4 w-4" />
      </div>
      <button
        type="button"
        aria-label="新图形"
        className="mb-1 -ml-2.5 flex h-6 w-7 items-center justify-center rounded-tr-lg rounded-bl-lg bg-[#2b343f]"
      >
        <Icon n="plus" className="h-3 w-3" />
      </button>
    </div>
  );
}

const panel = "flex shrink-0 items-center bg-[#313b4a] outline outline-[#252e3b]";

function Toolbars() {
  return (
    <div className="flex shrink-0 flex-col gap-[5px] bg-[#3b4453] pt-[5px] pb-2">
      <div className="flex h-[33px]">
        <div className={`${panel} w-[911px] pl-px`}>
          <Btn n="new" label="新建" />
          <Btn n="open" label="打开" />
          <Btn n="save" label="保存" />
          <Sep />
          <Btn n="print" label="打印" />
          <Btn n="preview" label="打印预览" />
          <Btn n="publish" label="发布" />
          <Btn n="sphere" label="三维打印" />
          <Sep />
          <Btn n="cut" label="剪切" />
          <Btn n="copy" label="复制" />
          <Btn n="paste" label="粘贴" />
          <Btn n="match" label="特性匹配" />
          <Btn n="blockedit" label="块编辑器" />
          <Sep />
          <Btn n="undo" label="放弃" />
          <Drop label="放弃列表" />
          <Btn n="redo" label="重做" />
          <Drop label="重做列表" />
          <Sep />
          <Btn n="pan" label="实时平移" />
          <Btn n="zoomrt" label="实时缩放" />
          <Btn n="zoomwin" label="窗口缩放" />
          <Btn n="zoomprev" label="缩放上一个" />
          <Sep />
          <Btn n="props" label="特性" />
          <Btn n="dcenter" label="设计中心" />
          <Btn n="toolpal" label="工具选项板" />
          <Btn n="sheetset" label="图纸集管理器" />
          <Btn n="markup" label="标记集管理器" />
          <Btn n="calc" label="快速计算器" />
          <Sep />
          <Btn n="help" label="帮助" />
        </div>
        <div className={`${panel} ml-1 pl-px`}>
          <Grip />
          <Btn n="textstyle" label="文字样式管理" className="w-9" />
          <Combo label="文字样式" className="h-full w-[172px]" />
          <Sep />
          <Btn n="dimstyle" label="标注样式管理" className="w-8" />
          <Combo label="标注样式" className="h-full w-[172px]" />
          <Sep />
          <Btn n="tablestyle" label="表格样式管理" className="w-8" />
          <Combo label="表格样式" className="h-full w-[172px]" />
          <Sep />
          <Btn n="leaderstyle" label="多重引线样式管理" className="w-8" />
          <Combo label="多重引线样式" className="h-full w-[171px]" />
        </div>
      </div>
      <div className="flex h-[31px]">
        <div className={`${panel} w-[318px] pl-0.5`}>
          <Combo label="工作空间" value="AutoCAD 经典" className="h-[31px] w-[251px]" pad="pl-2.5" />
          <Btn n="gear" label="工作空间设置" className="w-8" />
          <Btn n="gridhouse" label="我的工作空间" />
        </div>
        <div className={`${panel} ml-1`}>
          <div className="ml-0.5"><Grip /></div>
          <Btn n="layerprops" label="图层特性管理器" className="w-9" />
          <Combo
            label="图层"
            value="0"
            className="h-[30px] w-[430px]"
            pad="pl-1.5"
            prefix={
              <div className="ml-1 flex items-center">
                <Icon n="bulb" className="h-[22px] w-6" />
                <Icon n="sun" className="h-[22px] w-6" />
                <Icon n="vpfreeze" className="ml-1.5 h-6 w-6" />
                <Icon n="unlock" className="mx-1 h-6 w-6" />
                <div className="h-5 w-5 border-2 border-[#222] bg-white" />
              </div>
            }
          />
          <Btn n="layercurrent" label="将对象的图层置为当前" />
          <Btn n="layerprev" label="上一个图层" />
          <Btn n="layerstate" label="图层状态管理器" />
        </div>
        <div className={`${panel} ml-1`}>
          <div className="mr-1"><Grip /></div>
          <Combo
            label="颜色"
            value="颜色 136"
            className="h-[30px] w-[215px]"
            pad="pl-1"
            prefix={<div className="ml-1 h-[21px] w-[21px] border-2 border-[#1c2a2a] bg-[#00837c]" />}
          />
          <Sep />
          <Combo
            label="线型"
            value="ByLayer"
            className="h-[30px] w-[228px]"
            pad="pl-2"
            prefix={<div className="ml-1.5 h-0.5 w-[86px] bg-[#444]" />}
          />
          <Sep />
          <Combo
            label="线宽"
            value="ByLayer"
            className="h-[30px] w-[178px]"
            pad="pl-2"
            prefix={<div className="ml-1.5 h-0.5 w-[50px] bg-[#555]" />}
          />
          <Sep />
          <Combo label="打印样式" value="ByColor" className="h-[30px] w-[170px]" pad="pl-3.5" />
        </div>
      </div>
    </div>
  );
}

function DrawBar() {
  return (
    <aside className="w-[29px] shrink-0 overflow-hidden bg-[#3b4453] pt-0.5">
      <div className="flex w-6 flex-col gap-0.5 border-r border-b border-[#2a3340] pb-0.5">
        <svg viewBox="0 0 14 8" className="h-2 w-3.5" aria-hidden="true">
          <path d="M0 3.5h14M0 6.5h14" stroke="#9aa2ad" strokeWidth="1.5" strokeDasharray="1.5 1.5" />
        </svg>
        {drawTools.map((group, i) => (
          <div key={i}>
            {group.map(([n, label]) => (
              <Btn key={n} n={n} label={label} className="-ml-1.5 h-8 w-6" />
            ))}
          </div>
        ))}
      </div>
    </aside>
  );
}

function BlockBar() {
  return (
    <div className="ml-[5px] flex h-10 shrink-0 items-stretch border-b border-[#b5b5b5] bg-[#eeeeee] pb-1 text-black">
      <Btn n="bedit" label="编辑块定义" className="w-[33px]" />
      <Btn n="bsave" label="保存块定义" className="w-8" />
      <Btn n="bsaveas" label="将块另存为" className="w-8" />
      <input
        aria-label="块定义名称"
        defaultValue="A$C01EB0BB3"
        className="mt-0.5 mb-1 w-[258px] shrink-0 border border-[#8a8a8a] bg-[#fcfcfc] px-1 text-[17px] outline-none"
      />
      <Btn n="btest" label="测试块" className="w-[34px]" />
      <BarSep />
      <Btn n="autocon" label="自动约束" className="ml-1 w-8" />
      <Btn n="geocon" label="几何约束" className="w-8" />
      <Btn n="constatus" label="约束状态" className="w-[34px]" />
      <BarSep />
      <Btn n="dimlock" label="参数约束" className="ml-1 w-8" />
      <Btn n="btable" label="块表" className="w-[34px]" />
      <BarSep />
      <Btn n="bparam" label="参数" className="ml-1 w-8" />
      <Btn n="bolt" label="动作" className="w-8" />
      <Btn n="tag" label="定义属性" className="w-[34px]" />
      <BarSep />
      <Btn n="bpalette" label="编写选项板" className="ml-1 w-8" />
      <button type="button" aria-label="参数管理器" className="w-[34px] font-serif text-xl leading-6 font-bold text-[#444] italic">
        f<span className="text-sm">x</span>
      </button>
      <BarSep />
      <button type="button" className="ml-[7px] text-[17px] whitespace-nowrap">关闭块编辑器(C)</button>
      <div className="ml-auto flex items-stretch">
        <Btn n="vismode" label="可见性模式" className="w-8" />
        <Btn n="makevis" label="使可见" className="w-8" />
        <Btn n="makeinvis" label="使不可见" className="w-8" />
        <div className="ml-1 flex items-stretch"><BarSep /></div>
        <Btn n="visstates" label="管理可见性状态" className="mx-1 w-8" />
        <Combo label="可见性状态" value="可见性状态0" className="my-[3px] mr-[5px] w-[215px]" pad="pl-1" />
      </div>
    </div>
  );
}

function Drawing() {
  return (
    <svg className="absolute inset-0 h-full w-full" aria-label="块图形">
      <g transform="translate(-29 -220)" fill="none">
        <path d="M862 414H1300M1614 414H3000" stroke="#6f6c68" />
        <path d="M1538 413h2v2h-2z" fill="#8a8a8a" />
        <path d="M836 772q0 80 5 136" stroke="#77736f" />
        <path
          d="M734 412V388H836V414H862V670H836V772H734V748M772 426V735"
          stroke="#5e3520"
          strokeWidth="1.5"
        />
        <path d="M564 414H766M564 747H766M572 416V565M572 597V745" stroke="#1e2f9c" strokeWidth="5" />
        <path d="M573 414l6 26h-12zM573 747l6-27h-12z" fill="#2222ff" />
        <text x="543" y="588" fontSize="24" fontWeight="bold" fill="#1c35b4">距离1</text>
        <path d="M575 220V2000M29 534H3000" stroke="#dcdcdc" strokeWidth="1.5" />
        <path d="M565 571h17v16h-17z" fill="#0a84f5" />
        <path d="M772 391l12 35h-24z" fill="#b5e4f4" stroke="#dff6fc" />
        <path d="M764 404h17v18h-17z" fill="#0a7df2" />
        <path d="M772 770l12-36h-24z" fill="#b5e4f4" stroke="#dff6fc" />
        <path d="M764 737h17v17h-17z" fill="#0a7df2" />
        <path d="M788 706h25v25h-25z" fill="#b9c3d4" stroke="#2b4a9c" strokeWidth="1.5" />
        <path d="M791 709h19v19h-19z" fill="#fdd835" stroke="#8a7a30" />
        <path d="M801 712v8M801 722v3" stroke="#5a4300" strokeWidth="2" />
        <path d="M48 817V889H120M42 882h13v13H42z" stroke="#c4c4bd" strokeWidth="1.5" />
        <text x="51" y="812" fontSize="25" fontWeight="300" fill="#d2d2cc">Y</text>
        <text x="125" y="888" fontSize="25" fontWeight="300" fill="#d2d2cc">X</text>
      </g>
    </svg>
  );
}

function Palette() {
  return (
    <section aria-label="块编写选项板" className="absolute top-[54px] left-[1173px] flex text-[17px] text-[#dfe2e6]">
      <div className="flex w-[246px] rounded-sm bg-[#2d3542] pt-[5px] pr-1 pb-1">
        <div className="flex w-[34px] flex-col items-center gap-[14px] pt-1 pl-0.5">
          <Btn n="close" label="关闭" className="h-3.5" icon="h-3 w-3" />
          <Btn n="autohide" label="自动隐藏" className="h-3.5" icon="h-3.5 w-3.5" />
          <button type="button" aria-label="特性" className="flex h-3.5 items-center">
            <svg viewBox="0 0 24 24" className="h-4 w-4" aria-hidden="true">{gearTeeth("#c9cdd2", "#2d3542")}</svg>
          </button>
          <h2 className={`${sideText} mt-auto leading-6 text-[#aab0b9]`}>{"块编写选项板  -  所有选项板"}</h2>
          <Icon n="palettebox" className="mb-0.5 h-5 w-5" />
        </div>
        <ul className="flex h-[614px] flex-1 flex-col justify-between rounded-md bg-[#3b4453] pt-2 pr-2.5 pb-[25px] pl-[25px]">
          {paramItems.map((p) => (
            <li key={p.label}>
              <button
                type="button"
                className={`flex h-[53px] w-full items-center gap-1 rounded-sm pl-px ${p.active ? "bg-[#262d38]" : ""}`}
              >
                <svg viewBox="0 0 48 48" className="h-12 w-12 shrink-0" fill="none" aria-hidden="true">{p.art}</svg>
                {p.label}
              </button>
            </li>
          ))}
        </ul>
      </div>
      <div role="tablist" aria-label="选项板" className="-ml-1 flex flex-col pt-[5px] text-[#aab0b9]">
        <button type="button" role="tab" className="flex h-[146px] w-[31px] items-center justify-center rounded-r-md bg-[#3b4453] text-[#e6e9ec]">
          <span className={sideText}>参数</span>
        </button>
        {["动作", "参数集", "约束"].map((t) => (
          <button
            type="button"
            role="tab"
            key={t}
            className="flex h-[147px] w-[31px] items-center justify-center rounded-r-md border border-[#222934] bg-[#2d3542]"
          >
            <span className={sideText}>{t}</span>
          </button>
        ))}
      </div>
      <svg viewBox="0 0 14 20" className="absolute top-[397px] left-[151px] h-5 w-3.5" aria-hidden="true">
        <path d="M1 1v16l4-3 3 6 3-1-3-6h5z" fill="#fff" stroke="#222" strokeWidth="0.8" />
      </svg>
    </section>
  );
}

function Canvas() {
  return (
    <div className="flex min-h-[687px] flex-1">
      <div className="relative min-w-0 flex-1 overflow-hidden bg-black">
        <Drawing />
        <div className="absolute top-[332px] left-[564px] text-[17px] text-[#808080]">
          <p className="h-[34px] w-[129px] border border-[#9a9a9a] bg-[#fdfdfd] px-1 leading-7">输入动作类型</p>
          <ul className="mt-[3px] w-[119px] border border-[#8a8a8a] bg-[#fdfdfd]">
            {["阵列(A)", "移动(M)", "缩放(S)", "拉伸(T)"].map((t) => (
              <li key={t} className="h-[30px] border-b border-[#777] last:h-7 last:border-b-0">
                <button type="button" className="pl-[30px] leading-7">{t}</button>
              </li>
            ))}
          </ul>
        </div>
        <Palette />
      </div>
      <div className="w-2 shrink-0 bg-[#eeeeee] pt-[74px]">
        <div className="h-6 bg-[#c9c9c9]" />
      </div>
    </div>
  );
}

const mono = "[font-family:'DejaVu_Sans_Mono','Noto_Sans_CJK_SC',monospace]";

function CommandPanel() {
  return (
    <div className="flex shrink-0 border-t-4 border-[#333d4a] bg-[#2a323e]">
      <div className="flex w-[25px] flex-col gap-2 overflow-hidden pt-1.5">
        <svg viewBox="0 0 19 8" className="h-2 w-[19px]" aria-hidden="true">
          <path d="M0 2h19M0 6h19" stroke="#c9cdd2" strokeWidth="2" strokeDasharray="2 2" />
        </svg>
        <Btn n="closeThin" label="关闭" className="-ml-1 h-4 w-4 self-start" icon="h-4 w-4" />
        <Btn n="wrench" label="自定义" className="-ml-1 h-7 w-5 self-start" icon="h-5 w-5" />
      </div>
      <div className={`min-w-0 flex-1 text-[17px] ${mono}`}>
        <div className="h-[50px] border-b border-[#555] bg-[#c6c6c6] py-1 pl-1 text-[#2a2a2a]">
          <p className="leading-[22px]">命令:</p>
          <p className="leading-[22px]">命令: _.BACTION</p>
        </div>
        <div className="flex h-[30px] items-center border-b border-[#999] bg-[#fdfdfd] pl-1.5 whitespace-nowrap text-[#2a2a2a]">
          <button type="button" aria-label="最近使用的命令" className="flex items-center gap-1">
            <Icon n="prompt" className="h-[22px] w-[22px]" />
            <svg viewBox="0 0 10 6" className="h-1.5 w-2.5" aria-hidden="true">
              <path d="M0 0h10L5 6z" fill="#aaa" />
            </svg>
          </button>
          <label htmlFor="cmd" className="ml-2 flex items-center">
            <b className="text-black">BACTION</b>
            <span className="ml-[9px] text-lg">输入动作类型</span>
            <span className="ml-3">[</span>
          </label>
          <div className="flex gap-[7px]">
            {[["阵列", "A"], ["移动", "M"], ["缩放", "S"], ["拉伸", "T"]].map(([t, k]) => (
              <button type="button" key={k} className="h-[26px] rounded-md bg-[#cfcfcf] px-0.5">
                {t}(<span className="text-[#2020c8]">{k}</span>)
              </button>
            ))}
          </div>
          <span>]:</span>
          <input id="cmd" className="min-w-0 flex-1 bg-transparent px-1 outline-none" />
        </div>
      </div>
    </div>
  );
}

const layoutTab =
  "flex h-[27px] items-center justify-center rounded-b-xl [clip-path:polygon(0_0,100%_0,93%_85%,88%_100%,12%_100%,7%_85%)]";

function LayoutTabs() {
  return (
    <div className="flex h-[32px] shrink-0 items-start bg-[#1f2730] pl-[3px] text-[17px] text-[#b3b9c1]">
      <button type="button" className={`${layoutTab} w-[73px] bg-[#3b4453] font-bold text-[#f0f2f4]`}>模型</button>
      <button type="button" className={`${layoutTab} w-[76px] bg-[#29323d]`}>布局1</button>
      <button type="button" className={`${layoutTab} w-20 bg-[#29323d]`}>布局2</button>
      <button type="button" aria-label="新建布局" className={`${layoutTab} ml-1.5 w-8 bg-[#29323d]`}>
        <Icon n="plus" className="h-3 w-3" />
      </button>
    </div>
  );
}

const grp = "flex h-full shrink-0 items-center bg-[#3b4453]";
const Div = () => <div className="h-full w-px shrink-0 bg-[#242c38]" />;

function StatusBar() {
  return (
    <footer className="flex h-8 shrink-0 items-center gap-[3px] overflow-hidden bg-[#1f2730] pl-[408px] text-[17px] text-[#eceef0]">
      <button type="button" className={`${grp} w-10 justify-end pr-px font-bold`}>模型</button>
      <div className={grp}>
        <Btn n="grid" label="栅格" className="w-[34px]" />
        <Btn n="snapdots" label="捕捉" className="w-[34px]" />
        <Drop label="捕捉设置" className="w-[22px]" />
      </div>
      <div className={grp}>
        <Btn n="infer" label="推断约束" className="w-9" />
        <Div />
        <Btn n="dyn" label="动态输入" className="w-[33px] bg-[#5b87bd]" />
        <Div />
        <Div />
        <Btn n="ortho" label="正交" className="w-[33px] bg-[#5b87bd]" />
        <Btn n="polar" label="极轴追踪" className="w-9" />
        <Drop label="极轴设置" className="w-[21px]" />
        <Btn n="iso" label="等轴测草图" className="w-[35px]" />
        <Drop label="等轴测设置" className="w-[21px]" />
        <Div />
        <Btn n="angle" label="对象捕捉追踪" className="w-[35px]" />
        <Btn n="osnap" label="对象捕捉" className="w-[33px] bg-[#5b87bd]" />
        <Drop label="对象捕捉设置" className="w-[23px]" />
        <Div />
        <Btn n="lweight" label="线宽" className="w-[34px]" />
        <Div />
        <Btn n="checker" label="透明度" className="w-[35px]" />
        <Div />
        <Btn n="selcycle" label="选择循环" className="w-[34px]" />
        <Div />
        <Btn n="cube" label="三维对象捕捉" className="w-[35px]" />
        <Drop label="三维对象捕捉设置" className="w-[21px]" />
      </div>
      <div className={grp}>
        <Btn n="ducs" label="动态 UCS" className="w-9" />
        <Btn n="cubesel" label="选择过滤" className="w-[35px]" />
        <Drop label="选择过滤设置" className="w-[21px]" />
        <Btn n="gizmo" label="小控件" className="w-[33px] bg-[#5b87bd]" />
        <Drop label="小控件设置" className="w-[23px]" />
      </div>
      <div className={grp}>
        <Btn n="anno1" label="注释可见性" className="w-[33px] bg-[#5b87bd]" />
        <Btn n="anno2" label="自动缩放" className="w-[35px]" />
        <Btn n="anno3" label="注释比例" className="w-[35px]" />
        <button type="button" className="w-[84px] text-center whitespace-nowrap">1:1 / 100%</button>
        <Drop label="注释比例列表" className="w-[20px]" />
      </div>
      <div className={grp}>
        <Btn n="gear" label="切换工作空间" className="w-[35px]" />
        <Drop label="工作空间列表" className="w-[22px]" />
        <Div />
        <Btn n="plus" label="注释监视器" className="w-[35px]" />
      </div>
      <div className={grp}>
        <Btn n="ruler" label="单位" className="w-9" />
        <button type="button" className="w-[78px] pl-1.5 text-left font-bold">小数</button>
        <Drop label="单位列表" className="w-[27px]" />
        <Div />
        <Btn n="qprops" label="快捷特性" className="w-[33px]" />
      </div>
      <div className={grp}>
        <Btn n="uilock" label="锁定用户界面" className="w-[34px]" />
        <Drop label="锁定设置" className="w-[22px]" />
        <Div />
        <Btn n="shapes" label="隔离对象" className="w-[34px]" />
      </div>
      <Btn n="perf" label="图形性能" className="w-[34px] bg-[#5679a5]" />
      <div className={grp}>
        <Btn n="trusted" label="受信任的数字签名" className="w-[38px]" />
        <Btn n="monitor" label="系统变量监视器" className="w-[38px]" />
        <Btn n="attach" label="打印和发布详细信息" className="w-[41px]" />
      </div>
      <div className={`${grp} pl-1`}>
        <Btn n="clean" label="全屏显示" className="w-6" />
      </div>
    </footer>
  );
}

export default function App() {
  return (
    <div className="flex min-h-screen flex-col overflow-hidden bg-[#3b4453] [font-family:'Open_Sans','Noto_Sans_CJK_SC',sans-serif]">
      <Header />
      <FileTabs />
      <Toolbars />
      <div className="flex flex-1 border-b border-[#28313d]">
        <DrawBar />
        <main className="flex min-w-0 flex-1 flex-col bg-black pt-1.5">
          <BlockBar />
          <Canvas />
          <div className="flex h-[25px] shrink-0 items-center bg-[#eeeeee] pr-4">
            <button type="button" aria-label="向左滚动" className="flex w-6 justify-center">
              <svg viewBox="0 0 10 12" className="h-3 w-2.5" aria-hidden="true">
                <path d="M8 1L2 6l6 5" fill="none" stroke="#444" strokeWidth="2.2" />
              </svg>
            </button>
            <div className="h-[22px] w-6 bg-[#c9c9c9]" />
            <button type="button" aria-label="向右滚动" className="ml-auto">
              <svg viewBox="0 0 10 12" className="h-3 w-2.5" aria-hidden="true">
                <path d="M2 1l6 5-6 5" fill="none" stroke="#444" strokeWidth="2.2" />
              </svg>
            </button>
          </div>
        </main>
      </div>
      <CommandPanel />
      <LayoutTabs />
      <StatusBar />
    </div>
  );
}
